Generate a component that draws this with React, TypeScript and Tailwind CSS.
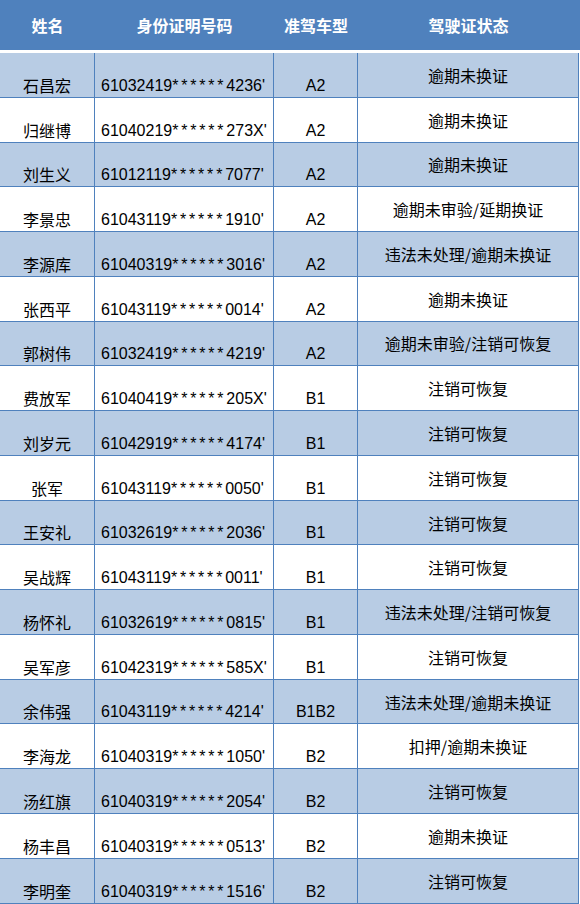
import * as React from "react";

type Row = {
  name: string;
  idHead: string;
  idTail: string;
  cls: string;
  status: string;
};

const ROWS: Row[] = [
  { name: "石昌宏", idHead: "61032419", idTail: "4236'", cls: "A2", status: "逾期未换证" },
  { name: "归继博", idHead: "61040219", idTail: "273X'", cls: "A2", status: "逾期未换证" },
  { name: "刘生义", idHead: "61012119", idTail: "7077'", cls: "A2", status: "逾期未换证" },
  { name: "李景忠", idHead: "61043119", idTail: "1910'", cls: "A2", status: "逾期未审验/延期换证" },
  { name: "李源库", idHead: "61040319", idTail: "3016'", cls: "A2", status: "违法未处理/逾期未换证" },
  { name: "张西平", idHead: "61043119", idTail: "0014'", cls: "A2", status: "逾期未换证" },
  { name: "郭树伟", idHead: "61032419", idTail: "4219'", cls: "A2", status: "逾期未审验/注销可恢复" },
  { name: "费放军", idHead: "61040419", idTail: "205X'", cls: "B1", status: "注销可恢复" },
  { name: "刘岁元", idHead: "61042919", idTail: "4174'", cls: "B1", status: "注销可恢复" },
  { name: "张军", idHead: "61043119", idTail: "0050'", cls: "B1", status: "注销可恢复" },
  { name: "王安礼", idHead: "61032619", idTail: "2036'", cls: "B1", status: "注销可恢复" },
  { name: "吴战辉", idHead: "61043119", idTail: "0011'", cls: "B1", status: "注销可恢复" },
  { name: "杨怀礼", idHead: "61032619", idTail: "0815'", cls: "B1", status: "违法未处理/注销可恢复" },
  { name: "吴军彦", idHead: "61042319", idTail: "585X'", cls: "B1", status: "注销可恢复" },
  { name: "余伟强", idHead: "61043119", idTail: "4214'", cls: "B1B2", status: "违法未处理/逾期未换证" },
  { name: "李海龙", idHead: "61040319", idTail: "1050'", cls: "B2", status: "扣押/逾期未换证" },
  { name: "汤红旗", idHead: "61040319", idTail: "2054'", cls: "B2", status: "注销可恢复" },
  { name: "杨丰昌", idHead: "61040319", idTail: "0513'", cls: "B2", status: "逾期未换证" },
  { name: "李明奎", idHead: "61040319", idTail: "1516'", cls: "B2", status: "注销可恢复" },
];

const CJK = "font-['Noto_Sans_CJK_SC',sans-serif]";
const LATIN = "font-['Liberation_Sans','Noto_Sans_CJK_SC',sans-serif]";
const COLS = "grid grid-cols-[95px_179px_84px_221px]";

export default function App() {
  return (
    <div className="h-[904px] w-[580px] overflow-hidden bg-white text-black">
      {/* header */}
      <div className={`${COLS} h-[50px] w-[580px] bg-[#4f81bd] text-[16px] font-bold text-white ${CJK}`}>
        <div className="flex items-center justify-center">姓名</div>
        <div className="flex items-center justify-center">身份证明号码</div>
        <div className="flex items-center justify-center">准驾车型</div>
        <div className="flex items-center justify-center">驾驶证状态</div>
      </div>
      <div className="h-[3px]" />

      {ROWS.map((r, i) => (
        <div
          key={i}
          className={`${COLS} h-[44.78px] w-[579px] border-b border-[#4f81bd] ${
            i % 2 === 0 ? "bg-[#b8cce4]" : "bg-white"
          }`}
        >
          <div className={`flex items-end justify-center border-r border-[#4f81bd] pb-[4px] text-[16px] leading-[16px] ${CJK}`}>
            {r.name}
          </div>
          <div className={`flex items-end border-r border-[#4f81bd] pb-[3px] pl-[6px] text-[16px] leading-[16px] ${LATIN}`}>
            <span>{r.idHead}</span>
            <span className="tracking-[2.8px]">******</span>
            <span>{r.idTail}</span>
          </div>
          <div className={`flex items-end justify-center border-r border-[#4f81bd] pb-[3px] text-[16px] leading-[16px] ${LATIN}`}>
            {r.cls}
          </div>
          <div className={`flex items-center justify-center border-r border-[#4f81bd] text-[16px] leading-[16px] ${CJK}`}>
            {r.status}
          </div>
        </div>
      ))}
    </div>
  );
}
